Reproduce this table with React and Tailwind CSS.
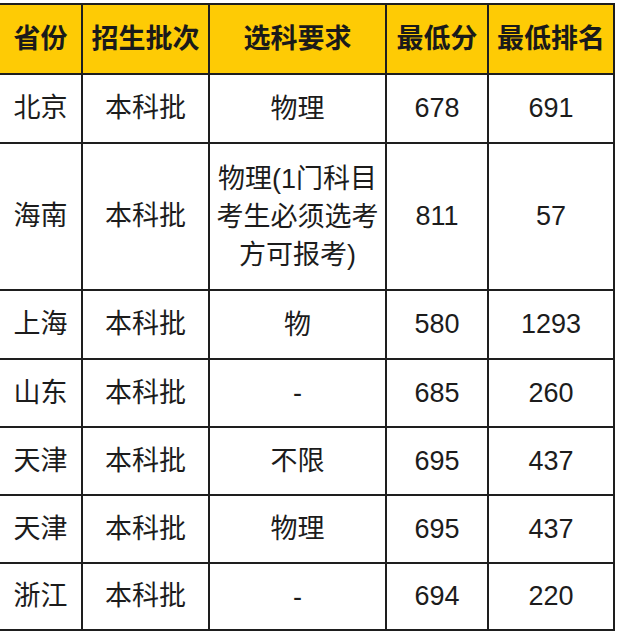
import React from "react";

const rows = [
  { prov: "北京", batch: "本科批", req: ["物理"], min: "678", rank: "691", h: "h-[69px]" },
  {
    prov: "海南",
    batch: "本科批",
    req: ["物理(1门科目", "考生必须选考", "方可报考)"],
    min: "811",
    rank: "57",
    h: "h-[147px]",
  },
  { prov: "上海", batch: "本科批", req: ["物"], min: "580", rank: "1293", h: "h-[69px]" },
  { prov: "山东", batch: "本科批", req: ["-"], min: "685", rank: "260", h: "h-[68px]" },
  { prov: "天津", batch: "本科批", req: ["不限"], min: "695", rank: "437", h: "h-[68px]" },
  { prov: "天津", batch: "本科批", req: ["物理"], min: "695", rank: "437", h: "h-[68px]" },
  { prov: "浙江", batch: "本科批", req: ["-"], min: "694", rank: "220", h: "h-[67px]" },
];

const headers = ["省份", "招生批次", "选科要求", "最低分", "最低排名"];
const widths = ["w-[83px]", "w-[127px]", "w-[177px]", "w-[102px]", "w-[126px]"];

export default function App() {
  return (
    <div
      className="min-h-screen bg-white pt-[3px] text-[#1c1c1c]"
      style={{ fontFamily: '"Liberation Sans", "Noto Sans CJK SC", sans-serif' }}
    >
      <table className="-ml-[2px] table-fixed border-separate border-spacing-0 border-t-2 border-l-2 border-[#1e1e1e] text-[27px]">
        <colgroup>
          {widths.map((w, i) => (
            <col key={i} className={w} />
          ))}
        </colgroup>
        <thead>
          <tr className="h-[70px] bg-[#fecb05]">
            {headers.map((h) => (
              <th
                key={h}
                className="border-r-2 border-b-2 border-[#1e1e1e] p-0 text-center align-middle font-bold text-[#1a1a1a]"
              >
                {h}
              </th>
            ))}
          </tr>
        </thead>
        <tbody>
          {rows.map((r, i) => (
            <tr key={i} className={r.h}>
              <td className="border-r-2 border-b-2 border-[#1e1e1e] p-0 text-center align-middle">
                {r.prov}
              </td>
              <td className="border-r-2 border-b-2 border-[#1e1e1e] p-0 text-center align-middle">
                {r.batch}
              </td>
              <td className="border-r-2 border-b-2 border-[#1e1e1e] p-0 text-center align-middle leading-[38px]">
                {r.req.map((line, j) => (
                  <div key={j}>{line}</div>
                ))}
              </td>
              <td className="border-r-2 border-b-2 border-[#1e1e1e] p-0 text-center align-middle">
                {r.min}
              </td>
              <td className="border-r-2 border-b-2 border-[#1e1e1e] p-0 text-center align-middle">
                {r.rank}
              </td>
            </tr>
          ))}
        </tbody>
      </table>
    </div>
  );
}
